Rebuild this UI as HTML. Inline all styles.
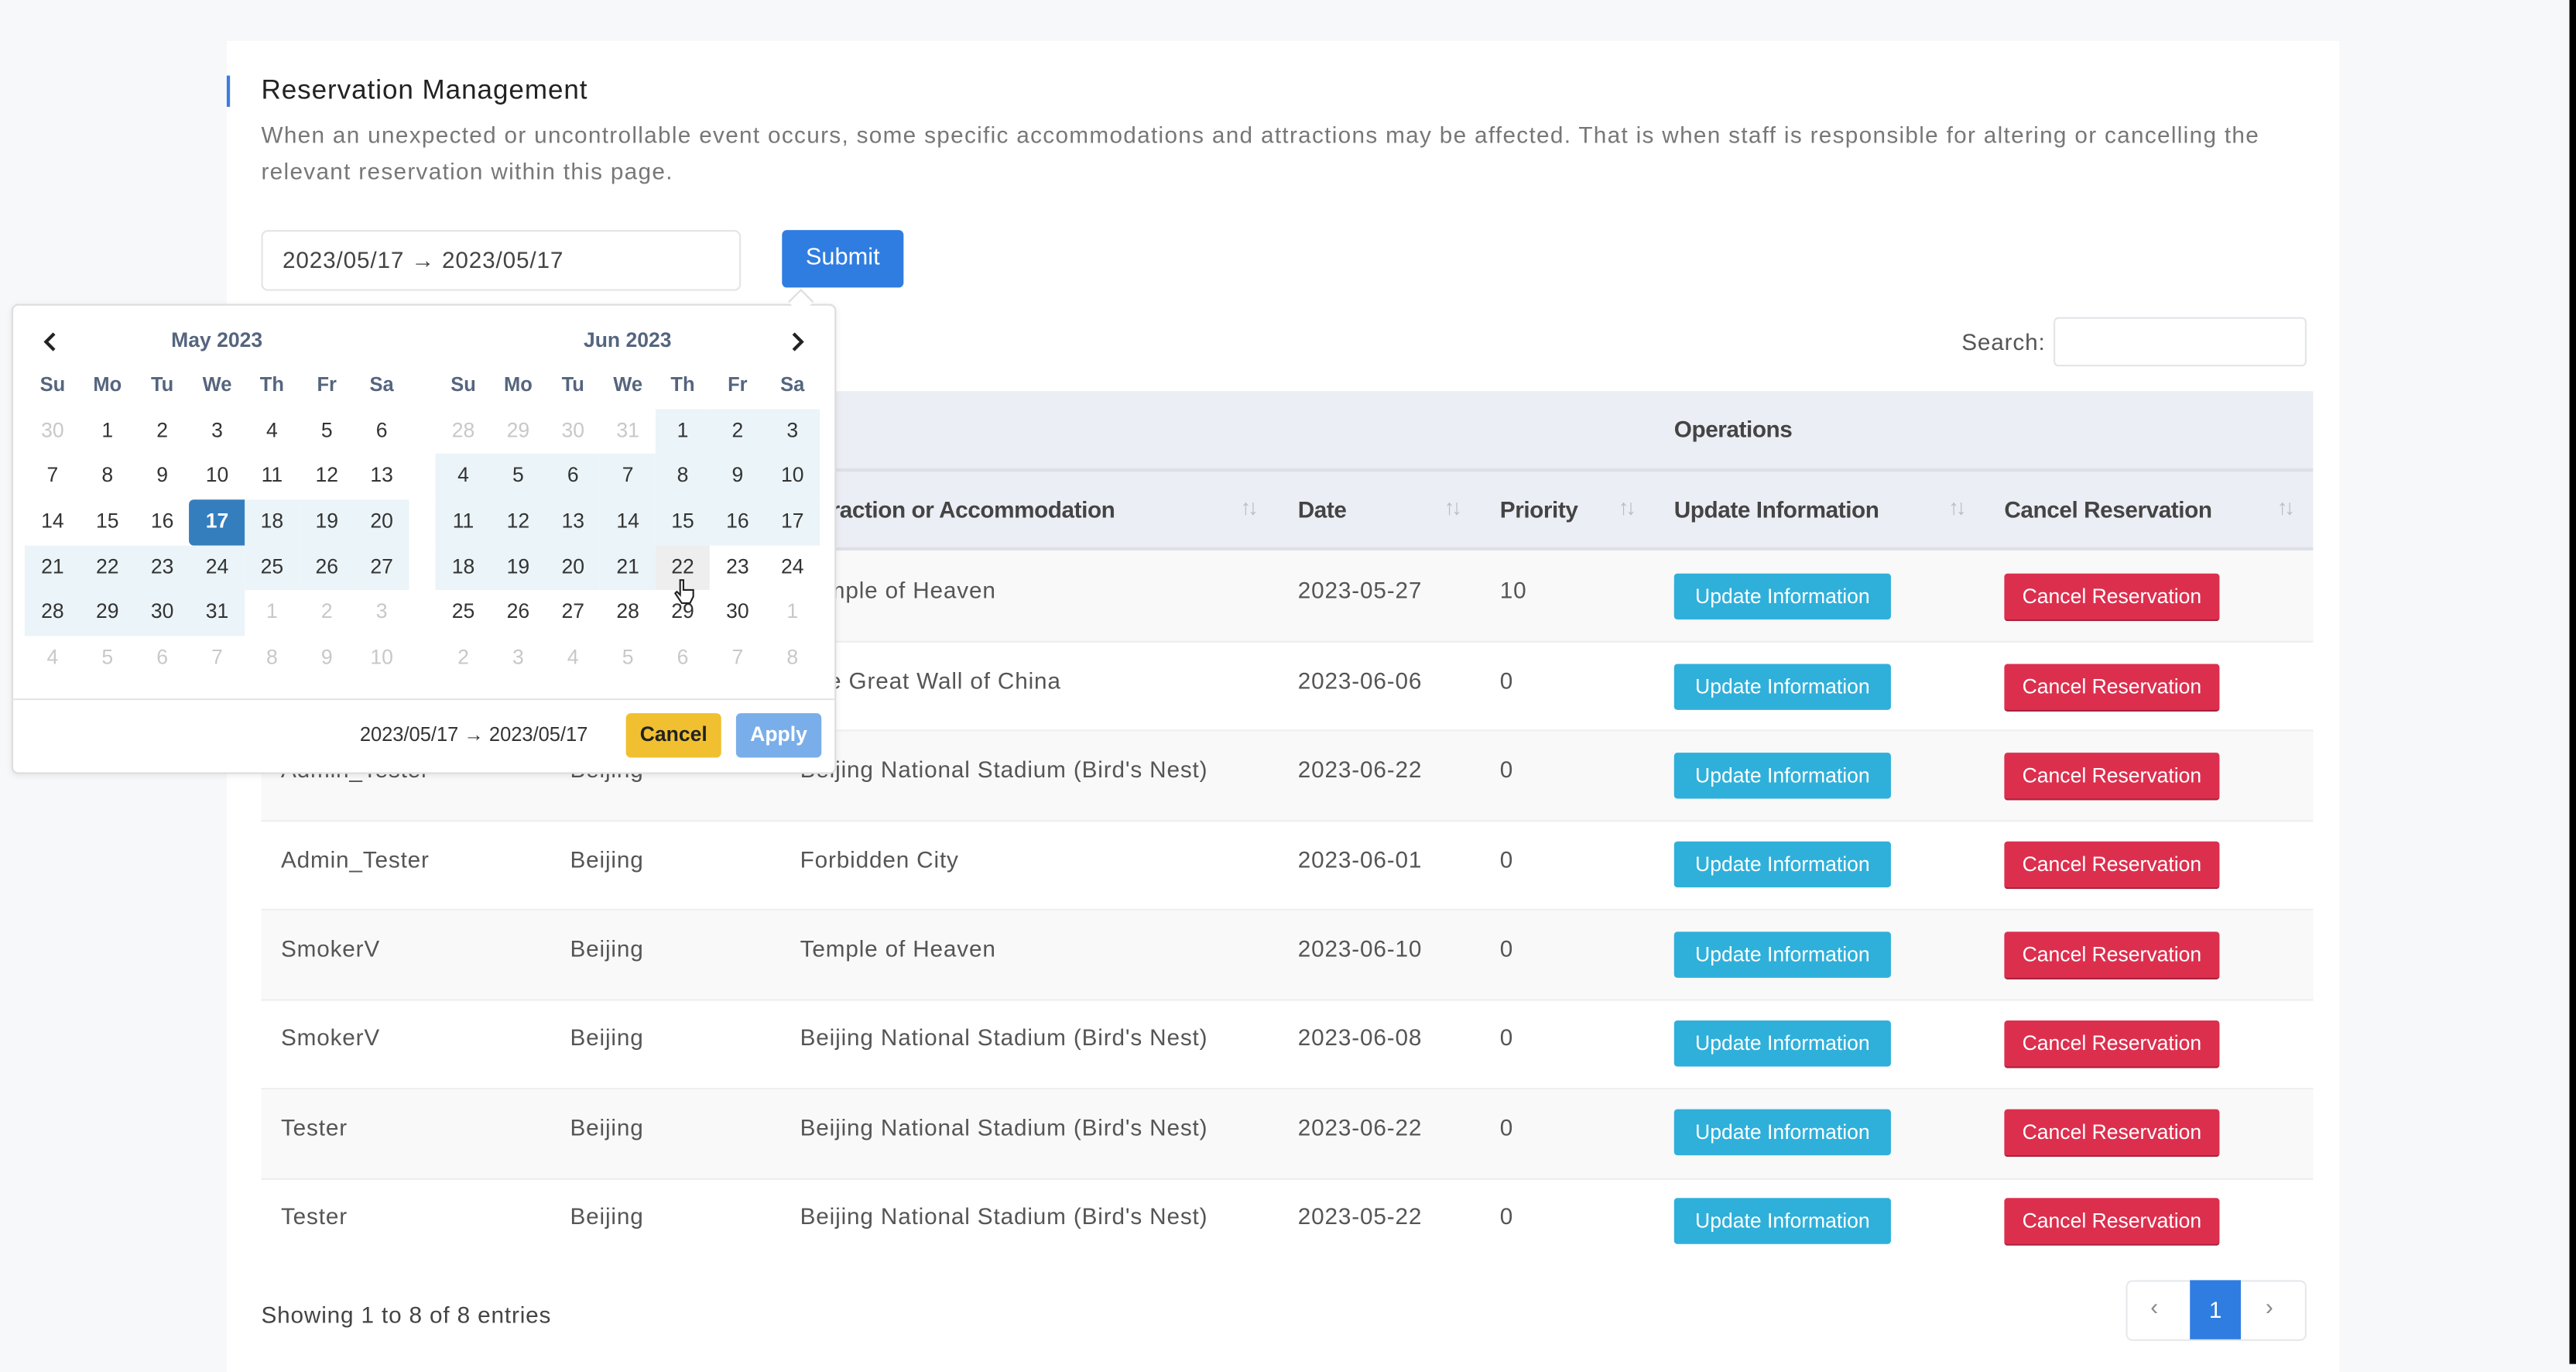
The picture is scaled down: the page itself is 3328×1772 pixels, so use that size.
<!DOCTYPE html>
<html><head><meta charset="utf-8"><style>
html,body{margin:0;padding:0;width:3328px;height:1762px;overflow:hidden;background:#f7f8fa;}
#st{position:absolute;left:0;top:0;width:1568px;height:830px;transform:scale(2.12245);transform-origin:0 0;font-family:"Liberation Sans",sans-serif;color:#4a4a4a;}
.a{position:absolute;}
.card{left:138px;top:25px;width:1286px;height:810px;background:#fff;}
.t{font-size:14px;color:#555;white-space:nowrap;letter-spacing:.4px;}
.hb{font-weight:bold;color:#444;letter-spacing:-.2px;}
.btn{position:absolute;height:28px;line-height:28px;color:#fff;font-size:12.5px;text-align:center;border-radius:2px;}
.ub{background:#2fb0da;width:132px;left:1019px;}
.cb{background:#dc2f4e;width:131px;left:1220px;border-bottom:1px solid #a8203a;}
.sort{font-size:13px;color:#b8bcc4;letter-spacing:-2px;}
.grid{position:absolute;display:grid;grid-template-columns:repeat(7,33.4px);grid-auto-rows:27.7px;font-size:12.5px;}
.grid div{text-align:center;line-height:27.7px;color:#333;}
.grid .o{color:#c8c8c8;}
.grid .r{background:#ebf4f8;}
.grid .s{background:#357ebd;color:#fff;font-weight:bold;border-radius:3px 0 0 3px;}
.grid .h{background:#eee;}
.grid .d{color:#55657e;font-weight:bold;font-size:12px;}
</style></head><body><div id="st">
<div class="a card"></div>
<div class="a" style="left:1564px;top:0;width:4px;height:830px;background:#000"></div>
<div class="a" style="left:138px;top:46px;width:2px;height:19px;background:#3b7ddd"></div>
<div class="a" style="left:159px;top:46px;font-size:16.5px;color:#222;letter-spacing:.45px">Reservation Management</div>
<div class="a" style="left:159px;top:71px;width:1240px;font-size:14px;line-height:22px;color:#777;letter-spacing:.62px">When an unexpected or uncontrollable event occurs, some specific accommodations and attractions may be affected. That is when staff is responsible for altering or cancelling the relevant reservation within this page.</div>
<div class="a" style="left:159px;top:140px;width:290px;height:35px;border:1px solid #e2e4e8;border-radius:4px;background:#fff"></div>
<div class="a t" style="left:172px;top:150px;color:#444">2023/05/17 → 2023/05/17</div>
<div class="a" style="left:476px;top:140px;width:74px;height:35px;background:#2f7de1;border-radius:3px;color:#fff;font-size:14.5px;line-height:35px;text-align:center">Submit</div>
<div class="a t" style="left:1194px;top:200px">Search:</div>
<div class="a" style="left:1250px;top:193px;width:152px;height:28px;border:1px solid #e2e4e8;border-radius:3px"></div>
<!-- table header -->
<div class="a" style="left:159px;top:238px;width:1249px;height:97px;background:#ebeef4"></div>
<div class="a" style="left:159px;top:285px;width:1249px;height:2px;background:#dde1e7"></div>
<div class="a" style="left:159px;top:333px;width:1249px;height:2px;background:#dde1e7"></div>
<div class="a t hb" style="left:1019px;top:253px">Operations</div>
<div class="a t hb" style="left:487px;top:302px">Attraction or Accommodation</div>
<div class="a sort" style="left:755px;top:301px">↑↓</div>
<div class="a t hb" style="left:790px;top:302px">Date</div>
<div class="a sort" style="left:879px;top:301px">↑↓</div>
<div class="a t hb" style="left:913px;top:302px">Priority</div>
<div class="a sort" style="left:985px;top:301px">↑↓</div>
<div class="a t hb" style="left:1019px;top:302px">Update Information</div>
<div class="a sort" style="left:1186px;top:301px">↑↓</div>
<div class="a t hb" style="left:1220px;top:302px">Cancel Reservation</div>
<div class="a sort" style="left:1386px;top:301px">↑↓</div>
<!-- rows -->
<div class="a" style="left:159px;top:335px;width:1249px;height:55px;background:#f9f9f9;border-bottom:1px solid #eee"></div>
<div class="a" style="left:159px;top:390px;width:1249px;height:54px;border-bottom:1px solid #eee"></div>
<div class="a" style="left:159px;top:445px;width:1249px;height:54px;background:#f9f9f9;border-bottom:1px solid #eee"></div>
<div class="a" style="left:159px;top:500px;width:1249px;height:53px;border-bottom:1px solid #eee"></div>
<div class="a" style="left:159px;top:554px;width:1249px;height:54px;background:#f9f9f9;border-bottom:1px solid #eee"></div>
<div class="a" style="left:159px;top:609px;width:1249px;height:53px;border-bottom:1px solid #eee"></div>
<div class="a" style="left:159px;top:663px;width:1249px;height:54px;background:#f9f9f9;border-bottom:1px solid #eee"></div>
<div class="a" style="left:159px;top:718px;width:1249px;height:54px"></div>

<div class="a t" style="left:171px;top:351px">Admin_Tester</div><div class="a t" style="left:347px;top:351px">Beijing</div><div class="a t" style="left:487px;top:351px">Temple of Heaven</div><div class="a t" style="left:790px;top:351px">2023-05-27</div><div class="a t" style="left:913px;top:351px">10</div>
<div class="a t" style="left:171px;top:406px">Admin_Tester</div><div class="a t" style="left:347px;top:406px">Beijing</div><div class="a t" style="left:487px;top:406px">The Great Wall of China</div><div class="a t" style="left:790px;top:406px">2023-06-06</div><div class="a t" style="left:913px;top:406px">0</div>
<div class="a t" style="left:171px;top:460px">Admin_Tester</div><div class="a t" style="left:347px;top:460px">Beijing</div><div class="a t" style="left:487px;top:460px">Beijing National Stadium (Bird's Nest)</div><div class="a t" style="left:790px;top:460px">2023-06-22</div><div class="a t" style="left:913px;top:460px">0</div>
<div class="a t" style="left:171px;top:515px">Admin_Tester</div><div class="a t" style="left:347px;top:515px">Beijing</div><div class="a t" style="left:487px;top:515px">Forbidden City</div><div class="a t" style="left:790px;top:515px">2023-06-01</div><div class="a t" style="left:913px;top:515px">0</div>
<div class="a t" style="left:171px;top:569px">SmokerV</div><div class="a t" style="left:347px;top:569px">Beijing</div><div class="a t" style="left:487px;top:569px">Temple of Heaven</div><div class="a t" style="left:790px;top:569px">2023-06-10</div><div class="a t" style="left:913px;top:569px">0</div>
<div class="a t" style="left:171px;top:623px">SmokerV</div><div class="a t" style="left:347px;top:623px">Beijing</div><div class="a t" style="left:487px;top:623px">Beijing National Stadium (Bird's Nest)</div><div class="a t" style="left:790px;top:623px">2023-06-08</div><div class="a t" style="left:913px;top:623px">0</div>
<div class="a t" style="left:171px;top:678px">Tester</div><div class="a t" style="left:347px;top:678px">Beijing</div><div class="a t" style="left:487px;top:678px">Beijing National Stadium (Bird's Nest)</div><div class="a t" style="left:790px;top:678px">2023-06-22</div><div class="a t" style="left:913px;top:678px">0</div>
<div class="a t" style="left:171px;top:732px">Tester</div><div class="a t" style="left:347px;top:732px">Beijing</div><div class="a t" style="left:487px;top:732px">Beijing National Stadium (Bird's Nest)</div><div class="a t" style="left:790px;top:732px">2023-05-22</div><div class="a t" style="left:913px;top:732px">0</div>

<div class="btn ub" style="top:349px">Update Information</div><div class="btn cb" style="top:349px">Cancel Reservation</div>
<div class="btn ub" style="top:404px">Update Information</div><div class="btn cb" style="top:404px">Cancel Reservation</div>
<div class="btn ub" style="top:458px">Update Information</div><div class="btn cb" style="top:458px">Cancel Reservation</div>
<div class="btn ub" style="top:512px">Update Information</div><div class="btn cb" style="top:512px">Cancel Reservation</div>
<div class="btn ub" style="top:567px">Update Information</div><div class="btn cb" style="top:567px">Cancel Reservation</div>
<div class="btn ub" style="top:621px">Update Information</div><div class="btn cb" style="top:621px">Cancel Reservation</div>
<div class="btn ub" style="top:675px">Update Information</div><div class="btn cb" style="top:675px">Cancel Reservation</div>
<div class="btn ub" style="top:729px">Update Information</div><div class="btn cb" style="top:729px">Cancel Reservation</div>

<div class="a t" style="left:159px;top:792px;color:#444">Showing 1 to 8 of 8 entries</div>
<div class="a" style="left:1294px;top:779px;width:108px;height:35px;border:1px solid #e6e8ec;border-radius:4px;background:#fff"></div>
<div class="a" style="left:1333px;top:779px;width:31px;height:36px;background:#2f7de1;color:#fff;font-size:14px;line-height:36px;text-align:center">1</div>
<div class="a" style="left:1309px;top:787px;color:#888;font-size:14px">‹</div>
<div class="a" style="left:1379px;top:787px;color:#888;font-size:14px">›</div>

<!-- datepicker -->
<div class="a" style="left:7px;top:185px;width:500px;height:284px;background:#fff;border:1px solid #ddd;border-radius:4px;box-shadow:0 1px 4px rgba(0,0,0,.08)"></div>
<div class="a" style="left:482px;top:178px;width:10px;height:10px;background:#fff;border-left:1px solid #ddd;border-top:1px solid #ddd;transform:rotate(45deg)"></div>
<svg class="a" style="left:24px;top:200px" width="14" height="16"><path d="M9 3 L4 8 L9 13" stroke="#222" stroke-width="2" fill="none"/></svg>
<svg class="a" style="left:478px;top:200px" width="14" height="16"><path d="M5 3 L10 8 L5 13" stroke="#222" stroke-width="2" fill="none"/></svg>
<div class="a" style="left:99px;top:200px;width:66px;text-align:center;font-size:12.5px;font-weight:bold;color:#55657e">May 2023</div>
<div class="a" style="left:349px;top:200px;width:66px;text-align:center;font-size:12.5px;font-weight:bold;color:#55657e">Jun 2023</div>
<div class="grid" style="left:15.3px;top:221px">
<div class="d">Su</div><div class="d">Mo</div><div class="d">Tu</div><div class="d">We</div><div class="d">Th</div><div class="d">Fr</div><div class="d">Sa</div>
<div class="o">30</div><div>1</div><div>2</div><div>3</div><div>4</div><div>5</div><div>6</div>
<div>7</div><div>8</div><div>9</div><div>10</div><div>11</div><div>12</div><div>13</div>
<div>14</div><div>15</div><div>16</div><div class="s">17</div><div class="r">18</div><div class="r">19</div><div class="r">20</div>
<div class="r">21</div><div class="r">22</div><div class="r">23</div><div class="r">24</div><div class="r">25</div><div class="r">26</div><div class="r">27</div>
<div class="r">28</div><div class="r">29</div><div class="r">30</div><div class="r">31</div><div class="o">1</div><div class="o">2</div><div class="o">3</div>
<div class="o">4</div><div class="o">5</div><div class="o">6</div><div class="o">7</div><div class="o">8</div><div class="o">9</div><div class="o">10</div>
</div>
<div class="grid" style="left:265.3px;top:221px">
<div class="d">Su</div><div class="d">Mo</div><div class="d">Tu</div><div class="d">We</div><div class="d">Th</div><div class="d">Fr</div><div class="d">Sa</div>
<div class="o">28</div><div class="o">29</div><div class="o">30</div><div class="o">31</div><div class="r">1</div><div class="r">2</div><div class="r">3</div>
<div class="r">4</div><div class="r">5</div><div class="r">6</div><div class="r">7</div><div class="r">8</div><div class="r">9</div><div class="r">10</div>
<div class="r">11</div><div class="r">12</div><div class="r">13</div><div class="r">14</div><div class="r">15</div><div class="r">16</div><div class="r">17</div>
<div class="r">18</div><div class="r">19</div><div class="r">20</div><div class="r">21</div><div class="h">22</div><div>23</div><div>24</div>
<div>25</div><div>26</div><div>27</div><div>28</div><div>29</div><div>30</div><div class="o">1</div>
<div class="o">2</div><div class="o">3</div><div class="o">4</div><div class="o">5</div><div class="o">6</div><div class="o">7</div><div class="o">8</div>
</div>
<div class="a" style="left:7px;top:425px;width:501px;height:1px;background:#e5e5e5"></div>
<div class="a" style="left:219px;top:440px;font-size:12px;color:#333">2023/05/17 → 2023/05/17</div>
<div class="a" style="left:381px;top:434px;width:58px;height:27px;background:#f0c030;border-radius:3px;font-size:12.5px;font-weight:bold;color:#222;line-height:27px;text-align:center">Cancel</div>
<div class="a" style="left:448px;top:434px;width:52px;height:27px;background:#7aaeea;border-radius:3px;font-size:12.5px;font-weight:bold;color:#fff;line-height:27px;text-align:center">Apply</div>
<svg class="a" style="left:409px;top:352px" width="14" height="18"><path d="M5 1 v9 l-2 -2 -1 1 4 6 h5 l2 -4 v-4 h-6 v-6 z" fill="#fff" stroke="#222" stroke-width="1"/></svg>
</div></body></html>
